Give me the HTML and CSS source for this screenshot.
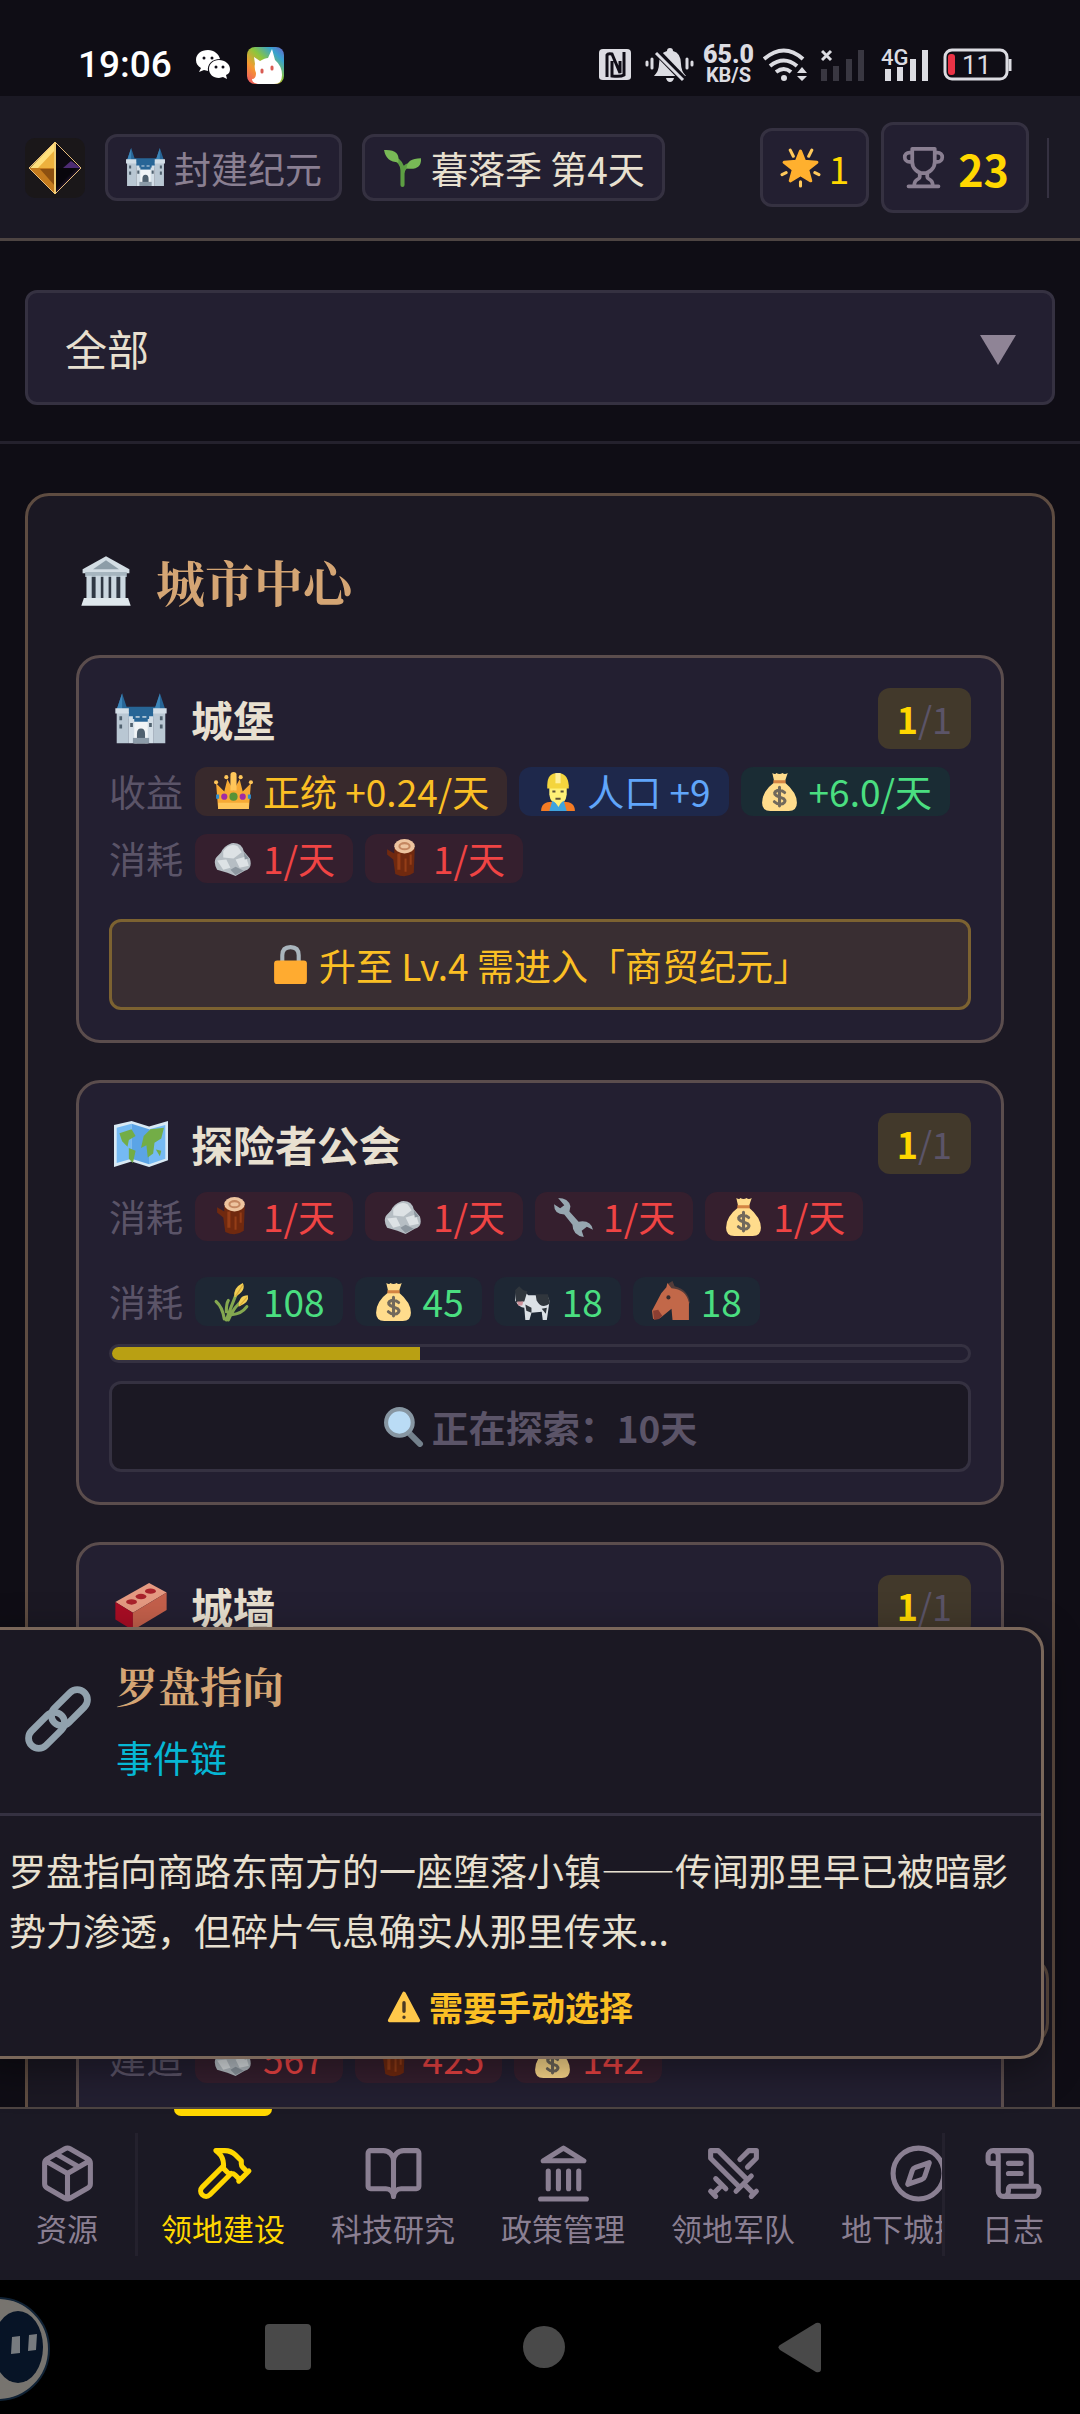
FILE: index.html
```
<!DOCTYPE html>
<html lang="zh-CN">

<head>
    <meta charset="UTF-8">
    <meta name="viewport" content="width=device-width, initial-scale=1.0">
    <title>领地建设</title>
    <link rel="stylesheet" href="styles.css">
</head>

<body>
    <!-- 图标 -->
    <svg class="sprite" aria-hidden="true">
        <symbol id="castle" viewBox="0 0 40 40">
            <path fill="#276596" d="M2 13 6 1l4 12zM30 13l4-12 4 12zM9 11h22v9H9z" />
            <path fill="#3d85b8" d="M6 1v12H2zM34 1v12h-4z" />
            <path fill="#b9c7d3" d="M2 15h9v23H2zM29 15h9v23h-9z" />
            <path fill="#d3dee7" d="M11 18h3v2h2v-2h3v2h2v-2h3v2h2v-2h3v20H11zM1 12h10v4H1zM29 12h10v4H29z" />
            <path fill="#f1f4f6" d="M15 22h10v16H15z" />
            <path fill="#276596" d="M15 19h10v3H15z" />
            <path fill="#50616f" d="M17 38v-7q0-4 3-4t3 4v7zM4 18h2v3H4zM34 18h2v3h-2zM4 24h2v3H4zM34 24h2v3h-2zM12 23h2v3h-2zM26 23h2v3h-2z" />
            <path fill="#8c9ba8" d="M14 34h12v4H14z" />
        </symbol>
        <symbol id="sprout" viewBox="0 0 40 40">
            <path fill="none" stroke="#5d9e43" stroke-width="4" stroke-linecap="round" d="M20 37V23q0-8-8-12M20 26q0-7 8-9" />
            <path fill="#78b956" d="M2 3q16-1 14 12Q4 15 2 3zM38 11q1 12-14 10 0-10 14-10z" />
        </symbol>
        <symbol id="star" viewBox="0 0 40 40">
            <path fill="#ffb02e" stroke="#ffb02e" stroke-width="3" stroke-linejoin="round" d="m20 4 4 10 12 1-9 7 3 11-10-6-10 6 3-11-9-7 12-1z" />
            <path fill="none" stroke="#ffc95c" stroke-width="3" stroke-linecap="round" d="m10 3 3 6M31 3l-3 6M2 27l4-2M38 27l-4-2M20 34v4" />
        </symbol>
        <symbol id="temple" viewBox="0 0 40 40">
            <path fill="#d3dde4" d="M20 1 38 11v3H2v-3z" />
            <path fill="#8d9da8" d="m20 4 10 7H10z" />
            <path fill="#a6b5bf" d="M4 13h32v4H4z" />
            <path fill="#303844" d="M5 17h30v17H5z" />
            <path fill="#cbd7e0" d="M5 16h4v18H5zM12 16h4v18h-4zM18 16h4v18h-4zM24 16h4v18h-4zM31 16h4v18h-4z" />
            <path fill="#dfe7ec" d="M3 33h34l2 6H1z" />
        </symbol>
        <symbol id="crown" viewBox="0 0 40 40">
            <path fill="#f6a934" d="M3 12 11 20 14 8l6 11 6-11 3 12 8-8-2 25H5z" />
            <path fill="#ffc65a" d="M5 31h30v6H5zM17 5h6v14h-6z" />
            <g fill="#ffc65a">
                <circle cx="3" cy="11" r="2" />
                <circle cx="37" cy="11" r="2" />
                <circle cx="13" cy="6" r="2" />
                <circle cx="27" cy="6" r="2" />
                <circle cx="20" cy="4" r="3" />
            </g>
            <circle cx="20" cy="25" r="4" fill="#589236" />
            <g fill="#a12ba4">
                <circle cx="11" cy="25" r="3" />
                <circle cx="29" cy="25" r="3" />
            </g>
            <path fill="#318fcf" d="M3 23h3v4H3zM34 23h3v4h-3z" />
        </symbol>
        <symbol id="worker" viewBox="0 0 40 40">
            <path fill="#fff176" d="M12 14h17v9q-1 9-8 10-8-1-9-10z" />
            <path fill="#f4d53d" d="M10 14Q10 2 20 2t11 12v3H10z" />
            <path fill="#fff09a" d="M18 2h5v10h-5z" />
            <path fill="#f47b24" d="M4 39q0-9 11-9l6 3 5-3q11 0 11 9z" />
            <path fill="#3fa4de" d="m15 29 6 4 5-4 3 10H12z" />
            <path fill="#fff176" d="M16 28h9l-4 7z" />
            <path stroke="#5d5338" stroke-width="2" d="M15 20h3M23 20h3M18 27h5" />
        </symbol>
        <symbol id="money" viewBox="0 0 40 40">
            <path fill="#ffdc8c" d="M13 2q3 2 4 0 3 2 6 0 2 2 5 0l-3 9q12 10 12 20 0 8-8 8H11q-8 0-8-8 0-11 12-20z" />
            <path fill="#d48443" d="M14 9h12v3H14z" />
            <path fill="none" stroke="#71695c" stroke-width="3" stroke-linecap="round" d="M20 16v18M25 21q-3-3-7-2-5 2-1 5l7 3q3 3-1 5-5 1-8-2" />
        </symbol>
        <symbol id="stone" viewBox="0 0 40 40">
            <path fill="#b6bec4" d="M8 14q2-6 10-9 10-1 12 8l6 7q3 10-5 12l-9 5-8-3-10-3Q-1 22 5 17z" />
            <path fill="#dde2e5" d="M10 13q6-9 14-5l4 6-8 6-10-1zM4 22l9-1 4 8-7 2zM22 21l10-3 3 9-9 2z" />
            <path fill="#8c969f" d="m17 31 5-3 8 4-8 4zM30 14l5 6-4 1z" />
        </symbol>
        <symbol id="wood" viewBox="0 0 40 40">
            <path fill="#70290f" d="M11 10h20l-1 24q-8 6-18 1l-2-14-6-5v-5l7 4z" />
            <path fill="#943d17" d="M14 15h3v16h-3zM21 20h2v13h-2zM26 16h2v10h-2z" />
            <ellipse cx="21" cy="8" rx="10" ry="7" fill="#edc49f" />
            <ellipse cx="21" cy="8" rx="5" ry="3" fill="none" stroke="#c48761" stroke-width="2" />
        </symbol>
        <symbol id="lock" viewBox="0 0 40 40">
            <path fill="none" stroke="#a9b5bd" stroke-width="4" d="M12 18V11q0-8 8-8t8 8v7" />
            <rect x="4" y="16" width="32" height="23" rx="3" fill="#ffab30" />
        </symbol>
        <symbol id="map" viewBox="0 0 40 40">
            <path fill="#d8e9f4" d="m0 6 13-3 13 4 14-4v29l-14 5-13-4-13 4z" />
            <path fill="#75baf3" d="m2 8 11-3v26L2 34zM26 9l12-3v25l-12 4z" />
            <path fill="#5ba4e6" d="m13 5 13 4v26l-13-4z" />
            <path fill="#73ad47" d="m4 12 9-3 3 5-5 3-1 5-4-4zM11 23l5 2-2 9-3-3zM22 14l5-5 10-1-2 8-5 3-1 8-4 3-1-9-4 2zM31 24l4 1-1 4z" />
        </symbol>
        <symbol id="wrench" viewBox="0 0 40 40">
            <path fill="#96a6b0" d="M5 2q10 0 12 8l-1 5 9 10q12-2 14 8l-6-3-5 4 2 6Q19 38 19 28l-8-10Q1 18 1 8l6 4 4-3z" />
        </symbol>
        <symbol id="wheat" viewBox="0 0 40 40">
            <path fill="none" stroke="#84a850" stroke-width="3" stroke-linecap="round" d="M13 38Q18 24 23 12M15 38q5-13 15-20M11 37Q9 25 3 20M18 33q10-1 15-8M13 30q0-8 2-11" />
            <path fill="#f2cf54" d="M21 16q-2-9 8-14 4 7-8 14zM25 25q0-11 9-11 2 7-9 11z" />
            <path d="M22 15 29 4M26 24l7-8" stroke="#d7a838" />
        </symbol>
        <symbol id="cow" viewBox="0 0 40 40">
            <path fill="#dce1e6" d="m4 10 5-2 7 6h17q5 3 3 10l-2 14h-4l-1-8-10 1-2 7h-4l-1-12q-5 0-9-7z" />
            <path fill="#30363d" d="m3 9 4-4 4 4 4 1-3 10-8 1zM23 13h12l2 9q-8 6-13-3zM13 23l6 3v5l-5-2zM29 27l5-1-1 6z" />
            <path fill="#cf929b" d="M5 20h6l-1 4H6z" />
        </symbol>
        <symbol id="horse" viewBox="0 0 40 40">
            <path fill="#543c39" d="m16 3 5-3 2 5q13 3 15 16l-4 6z" />
            <path fill="#c26849" d="m16 2 4 5q14 1 17 14v17H21l-1-11-11 9-7 1-1-8 9-17 5-6z" />
            <path fill="#8b3e32" d="m2 29 5-1 4 6-3 3-5 1z" />
            <circle cx="17" cy="16" r="2" fill="#382b2c" />
        </symbol>
        <symbol id="search" viewBox="0 0 40 40">
            <path stroke="#74818c" stroke-width="6" stroke-linecap="round" d="m26 27 10 10" />
            <circle cx="16" cy="16" r="13" fill="#badcf5" stroke="#8796a2" stroke-width="4" />
        </symbol>
        <symbol id="brick" viewBox="0 0 40 40">
            <path fill="#e59a82" d="m1 17 25-14 13 7-25 15z" />
            <path fill="#a90d24" d="m1 17 13 8v13L1 30z" />
            <path fill="#c4604b" d="m14 25 25-15v13L14 38z" />
            <g fill="#a9222b">
                <ellipse cx="13" cy="17" rx="4" ry="2" />
                <ellipse cx="20" cy="13" rx="4" ry="2" />
                <ellipse cx="27" cy="9" rx="4" ry="2" />
            </g>
        </symbol>
        <symbol id="chain" viewBox="0 0 40 40">
            <g fill="none" stroke="#91a1ad" stroke-width="4" transform="rotate(45 20 20)">
                <rect x="14" y="-2" width="12" height="25" rx="6" />
                <rect x="14" y="17" width="12" height="25" rx="6" />
            </g>
        </symbol>
        <symbol id="warning" viewBox="0 0 40 40">
            <path fill="#ffc84a" stroke="#ffc84a" stroke-width="4" stroke-linejoin="round" d="m20 4 17 32H3z" />
            <path stroke="#4b3a23" stroke-width="4" stroke-linecap="round" d="M20 15v10M20 32v0" />
        </symbol>
        <symbol id="trophy" viewBox="0 0 24 24">
            <path d="M6 9H4.500a2.500 2.500 0 0 1 0-5H6M18 9h1.500a2.500 2.500 0 0 0 0-5H18M4 22h16M10 14.660V17c0 .55-.47.98-.97 1.210C7.850 18.750 7 20.240 7 22M14 14.660V17c0 .55.47.98.97 1.210C16.150 18.750 17 20.240 17 22M18 2H6v7a6 6 0 0 0 12 0V2Z" />
        </symbol>
    </svg>

    <div class="app">
        <div class="status">
            <span class="clock">19:06</span>
            <svg class="wechat" viewBox="0 0 34 30">
                <path fill="#fff" d="M12 0C5 0 0 4 0 10c0 4 2 6 5 8l-2 4 5-2 4 1C11 14 16 9 24 9 23 4 18 0 12 0z" />
                <path fill="#fff" d="M23 10c-6 0-10 4-10 9s4 9 10 9l4-1 4 2-1-4c3-1 4-3 4-6 0-5-5-9-11-9z" />
                <path stroke="#100e17" stroke-width="3" stroke-linecap="round" d="M8 8v0M16 8v0M20 17v0M27 17v0" />
            </svg>
            <svg class="pet" viewBox="0 0 37 37">
                <defs>
                    <linearGradient id="rainbow" x1="0" y1="1" x2="1" y2="0">
                        <stop offset="0" stop-color="#f0506a" />
                        <stop offset="0.300" stop-color="#f59a30" />
                        <stop offset="0.550" stop-color="#8cc63c" />
                        <stop offset="0.800" stop-color="#38a3cf" />
                        <stop offset="1" stop-color="#6a60c8" />
                    </linearGradient>
                </defs>
                <rect width="37" height="37" rx="8" fill="url(#rainbow)" />
                <path fill="#fff" d="M8 17 7 10l6 4q5-3 8-3l4-9 3 11q7 6 7 15 0 9-8 9H11q-6-1-6-5 4 0 4-6-2-5-1-9z" />
                <path stroke="#d85b52" stroke-width="3" stroke-linecap="round" d="M15 23v2M25 20v2" />
            </svg>
            <div class="status-right">
                <svg class="nfc" viewBox="0 0 37 34">
                    <path fill="#dcdce2" d="M4 1h24q4 0 4 4v24q0 3-4 3H4q-4 0-4-3V5q0-4 4-4z" />
                    <path fill="none" stroke="#100e17" stroke-width="3" d="M8 29V7q1-2 5-1l8 19V13M13 13v15q9 1 12-1V4" />
                </svg>
                <svg class="bell" viewBox="0 0 49 34">
                    <path fill="#dcdce2" d="M25 0q3 0 3 3 8 2 8 13 0 7 5 12H9q5-5 5-12Q14 5 22 3q0-3 3-3zM21 30h8q-1 4-4 4t-4-4z" />
                    <path stroke="#100e17" stroke-width="7" d="m11 3 28 29" />
                    <path stroke="#dcdce2" stroke-width="3" d="m11 5 27 27" />
                    <path stroke="#dcdce2" stroke-width="3" stroke-linecap="round" d="M7 11v9M42 11v9M2 14v3M47 14v3" />
                </svg>
                <div class="speed">
                    <b>65.0</b>
                    <span>KB/S</span>
                </div>
                <svg class="wifi" viewBox="0 0 49 34">
                    <path fill="none" stroke="#dcdce2" stroke-width="4" d="M1 11q20-17 39 0M7 18q14-11 27 0M13 24q8-6 15 0" />
                    <circle cx="21" cy="30" r="3" fill="#dcdce2" />
                    <path fill="#dcdce2" d="m39 19 5 6H34zM39 33l5-5H34z" />
                </svg>
                <svg class="signal" viewBox="0 0 51 34">
                    <path fill="#393741" d="M0 21h6v12H0zM12 18h6v15h-6zM25 11h6v22h-6zM37 2h6v31h-6z" />
                    <path stroke="#dcdce2" stroke-width="3" d="m1 3 9 9M10 3l-9 9" />
                </svg>
                <svg class="signal-4g" viewBox="0 0 53 34">
                    <text x="0" y="17">4G</text>
                    <path fill="#dcdce2" d="M4 21h6v12H4zM16 19h6v14h-6zM29 11h6v22h-6zM41 2h6v31h-6z" />
                </svg>
                <svg class="battery" viewBox="0 0 69 34">
                    <rect x="2" y="2" width="62" height="29" rx="7" fill="none" stroke="#dcdce2" stroke-width="3" />
                    <path stroke="#dcdce2" stroke-width="3" d="M67 11v12" />
                    <rect x="5" y="6" width="7" height="21" rx="3" fill="#ea3346" />
                    <text x="19" y="26">11</text>
                </svg>
            </div>
        </div>

        <header class="topbar">
            <svg class="logo" viewBox="0 0 60 60">
                <defs>
                    <linearGradient id="gem" x1="0" y1="0" x2="1" y2="1">
                        <stop offset="0.400" stop-color="#08060c" />
                        <stop offset="1" stop-color="#8d53ce" />
                    </linearGradient>
                </defs>
                <rect width="60" height="60" rx="10" fill="#1a1719" />
                <path fill="#ffe07c" d="M30 4v27H4z" />
                <path fill="#edb13d" d="m30 12-17 18h17z" />
                <path fill="#c47b1d" d="M4 30h26v26z" />
                <path fill="#8c5010" d="M30 31v17L15 31z" />
                <path fill="#0c0911" d="M30 4 56 30H30z" />
                <path fill="url(#gem)" d="M30 30h26L30 56z" />
                <path fill="#4d2b73" d="m46 23 10 7H38z" />
                <path fill="none" stroke="#e8bd7c" d="m30 4 26 26-26 26L4 30z" />
                <path stroke="#f2cd73" stroke-width="2" d="M30 4v52" />
            </svg>
            <div class="pill pill-era"><svg class="emoji"><use href="#castle" /></svg>封建纪元</div>
            <div class="pill"><svg class="emoji"><use href="#sprout" /></svg>暮落季 第4天</div>
            <div class="topbar-right">
                <button class="pill pill-star"><svg class="emoji"><use href="#star" /></svg>1</button>
                <button class="pill pill-score"><svg class="line-icon"><use href="#trophy" /></svg>23</button>
                <span class="topbar-line"></span>
            </div>
        </header>

        <main class="content">
            <div class="filter">
                <select class="filter-select" aria-label="分类">
                    <option>全部</option>
                </select>
                <svg class="filter-arrow" viewBox="0 0 36 30"><path fill="#8f8496" d="M0 0h36L18 30z" /></svg>
            </div>

            <div class="list">
                <section class="district">
                    <h2 class="district-title"><svg><use href="#temple" /></svg>城市中心</h2>

                    <article class="building">
                        <div class="building-head">
                            <svg class="building-icon"><use href="#castle" /></svg>
                            <h3>城堡</h3>
                            <span class="count"><b>1</b>/1</span>
                        </div>
                        <div class="row">
                            <span class="row-label">收益</span>
                            <span class="chip chip-gold"><svg class="emoji"><use href="#crown" /></svg>正统 +0.24/天</span>
                            <span class="chip chip-blue"><svg class="emoji"><use href="#worker" /></svg>人口 +9</span>
                            <span class="chip chip-green"><svg class="emoji"><use href="#money" /></svg>+6.0/天</span>
                        </div>
                        <div class="row">
                            <span class="row-label">消耗</span>
                            <span class="chip chip-red"><svg class="emoji"><use href="#stone" /></svg>1/天</span>
                            <span class="chip chip-red"><svg class="emoji"><use href="#wood" /></svg>1/天</span>
                        </div>
                        <button class="action action-locked"><svg class="emoji"><use href="#lock" /></svg>升至 Lv.4 需进入「商贸纪元」</button>
                    </article>

                    <article class="building">
                        <div class="building-head">
                            <svg class="building-icon"><use href="#map" /></svg>
                            <h3>探险者公会</h3>
                            <span class="count"><b>1</b>/1</span>
                        </div>
                        <div class="row">
                            <span class="row-label">消耗</span>
                            <span class="chip chip-red"><svg class="emoji"><use href="#wood" /></svg>1/天</span>
                            <span class="chip chip-red"><svg class="emoji"><use href="#stone" /></svg>1/天</span>
                            <span class="chip chip-red"><svg class="emoji"><use href="#wrench" /></svg>1/天</span>
                            <span class="chip chip-red"><svg class="emoji"><use href="#money" /></svg>1/天</span>
                        </div>
                        <div class="row row-cost">
                            <span class="row-label">消耗</span>
                            <span class="chip chip-ok"><svg class="emoji"><use href="#wheat" /></svg>108</span>
                            <span class="chip chip-ok"><svg class="emoji"><use href="#money" /></svg>45</span>
                            <span class="chip chip-ok"><svg class="emoji"><use href="#cow" /></svg>18</span>
                            <span class="chip chip-ok"><svg class="emoji"><use href="#horse" /></svg>18</span>
                        </div>
                        <div class="progress">
                            <div class="progress-bar" style="width: 36%"></div>
                        </div>
                        <button class="action action-busy" disabled><svg class="emoji"><use href="#search" /></svg>正在探索：10天</button>
                    </article>

                    <article class="building">
                        <div class="building-head">
                            <svg class="building-icon"><use href="#brick" /></svg>
                            <h3>城墙</h3>
                            <span class="count"><b>1</b>/1</span>
                        </div>
                        <div class="building-space"></div>
                        <div class="row">
                            <span class="row-label">建造</span>
                            <span class="chip chip-red"><svg class="emoji"><use href="#stone" /></svg>567</span>
                            <span class="chip chip-red"><svg class="emoji"><use href="#wood" /></svg>425</span>
                            <span class="chip chip-red"><svg class="emoji"><use href="#money" /></svg>142</span>
                        </div>
                        <div class="building-space"></div>
                    </article>
                </section>
            </div>

            <div class="float-box"></div>

            <!-- 事件弹窗 -->
            <aside class="toast">
                <div class="toast-head">
                    <svg class="toast-icon"><use href="#chain" /></svg>
                    <div>
                        <h4>罗盘指向</h4>
                        <p class="toast-type">事件链</p>
                    </div>
                </div>
                <div class="toast-body">
                    <p>罗盘指向商路东南方的一座堕落小镇——传闻那里早已被暗影势力渗透，但碎片气息确实从那里传来...</p>
                    <p class="toast-warn"><svg><use href="#warning" /></svg>需要手动选择</p>
                </div>
            </aside>
        </main>

        <nav class="tabs">
            <a class="tab tab-left" href="#">
                <svg class="line-icon" viewBox="0 0 24 24">
                    <path d="M11 21.730a2 2 0 0 0 2 0l7-4A2 2 0 0 0 21 16V8a2 2 0 0 0-1-1.730l-7-4a2 2 0 0 0-2 0l-7 4A2 2 0 0 0 3 8v8a2 2 0 0 0 1 1.730zM12 22V12M3.290 7 12 12l8.710-5M7.500 4.270l9 5.150" />
                </svg>
                资源
            </a>
            <div class="tabs-scroll">
                <a class="tab active" href="#">
                    <svg class="line-icon" viewBox="0 0 24 24">
                        <path d="m15 12-8.373 8.373a1 1 0 1 1-3-3L12 9M18 15l4-4M21.500 11.500l-1.914-1.914A2 2 0 0 1 19 8.172V7l-2.260-2.260a6 6 0 0 0-4.202-1.756L9 2.960l.92.82A6.180 6.180 0 0 1 12 8.400V10l2 2h1.172a2 2 0 0 1 1.414.586L18.500 14.500" />
                    </svg>
                    领地建设
                </a>
                <a class="tab" href="#">
                    <svg class="line-icon" viewBox="0 0 24 24">
                        <path d="M12 7v14M3 18a1 1 0 0 1-1-1V4a1 1 0 0 1 1-1h5a4 4 0 0 1 4 4 4 4 0 0 1 4-4h5a1 1 0 0 1 1 1v13a1 1 0 0 1-1 1h-6a3 3 0 0 0-3 3 3 3 0 0 0-3-3z" />
                    </svg>
                    科技研究
                </a>
                <a class="tab" href="#">
                    <svg class="line-icon" viewBox="0 0 24 24">
                        <path d="M3 22h18M6 18v-7M10 18v-7M14 18v-7M18 18v-7M12 2l8 5H4z" />
                    </svg>
                    政策管理
                </a>
                <a class="tab" href="#">
                    <svg class="line-icon" viewBox="0 0 24 24">
                        <path d="M14.500 17.500 3 6V3h3l11.500 11.500M13 19l6-6M16 16l4 4M19 21l2-2M14.500 6.500 18 3h3v3l-3.500 3.500M5 14l4 4M7 17l-3 3M3 19l2 2" />
                    </svg>
                    领地军队
                </a>
                <a class="tab" href="#">
                    <svg class="line-icon" viewBox="0 0 24 24">
                        <circle cx="12" cy="12" r="10" />
                        <path d="m16.240 7.760-1.804 5.411a2 2 0 0 1-1.265 1.265L7.760 16.240l1.804-5.411a2 2 0 0 1 1.265-1.265z" />
                    </svg>
                    地下城探索
                </a>
            </div>
            <a class="tab tab-right" href="#">
                <svg class="line-icon" viewBox="0 0 24 24">
                    <path d="M15 12h-5M15 8h-5M19 17V5a2 2 0 0 0-2-2H4M8 21h12a2 2 0 0 0 2-2v-1a1 1 0 0 0-1-1H11a1 1 0 0 0-1 1v1a2 2 0 1 1-4 0V5a2 2 0 1 0-4 0v2a1 1 0 0 0 1 1h3" />
                </svg>
                日志
            </a>
        </nav>

        <div class="system">
            <svg class="robot" viewBox="0 0 52 106">
                <circle cx="-2" cy="53" r="51" fill="#77746f" stroke="#102235" stroke-width="2" />
                <ellipse cx="18" cy="51" rx="25" ry="36" fill="#071426" />
                <path fill="#777b7f" d="m12 41 8-1v17l-9 1zM29 39l8-1-1 16-8 1z" />
            </svg>
            <button aria-label="最近任务"><svg width="46" height="46"><rect width="46" height="46" rx="4" /></svg></button>
            <button aria-label="主页"><svg width="43" height="43"><circle cx="21" cy="21" r="21" /></svg></button>
            <button aria-label="返回"><svg width="43" height="51"><path d="M2 23 38 1q5-1 5 3v43q0 4-5 3L2 28q-3-3 0-5z" /></svg></button>
        </div>
    </div>
</body>

</html>
```
FILE: styles.css
```
* {
    box-sizing: border-box;
    margin: 0;
    padding: 0;
}

body {
    background: #0f0d15;
    color: #e8e0d0;
    font-family: "Noto Sans CJK SC", sans-serif;
    font-size: 37px;
}

button {
    border: none;
    background: none;
    color: inherit;
    font: inherit;
}

a {
    color: inherit;
    text-decoration: none;
}

svg {
    display: block;
    flex-shrink: 0;
}

.sprite {
    position: absolute;
    width: 0;
    height: 0;
}

.app {
    display: flex;
    flex-direction: column;
    height: 100vh;
    overflow: hidden;
}

.emoji {
    width: 41px;
    height: 41px;
}

.line-icon {
    width: 61px;
    height: 61px;
    fill: none;
    stroke: currentColor;
    stroke-width: 2;
    stroke-linecap: round;
    stroke-linejoin: round;
}

/* 状态栏 */
.status {
    display: flex;
    align-items: center;
    height: 96px;
    padding: 34px 68px 0 78px;
    flex-shrink: 0;
}

.clock {
    color: #fff;
    font: 500 37px/44px Roboto, sans-serif;
}

.wechat {
    width: 34px;
    height: 30px;
    margin-left: 24px;
}

.pet {
    width: 37px;
    height: 37px;
    margin-left: 17px;
}

.status-right {
    display: flex;
    align-items: center;
    gap: 9px;
    margin-left: auto;
    color: #dcdce2;
    font-family: Roboto, sans-serif;
}

.status-right svg {
    height: 34px;
}

.nfc {
    width: 37px;
}

.bell,
.wifi {
    width: 49px;
}

.signal {
    width: 51px;
}

.signal-4g {
    width: 53px;
}

.battery {
    width: 69px;
}

.signal-4g text {
    fill: #dcdce2;
    font: 500 22px Roboto, sans-serif;
}

.battery text {
    fill: #dcdce2;
    font: 26px Roboto, sans-serif;
}

.speed {
    width: 51px;
    text-align: center;
    font-size: 20px;
    font-weight: 700;
    line-height: 20px;
    white-space: nowrap;
}

.speed b {
    display: block;
    font-size: 25px;
}

.speed span {
    display: block;
}

/* 顶栏 */
.topbar {
    display: flex;
    align-items: center;
    gap: 20px;
    padding: 26px 31px 25px 25px;
    background: #1b1924;
    border-bottom: 3px solid #4d4442;
    white-space: nowrap;
    flex-shrink: 0;
}

.logo {
    width: 60px;
    height: 60px;
}

.pill {
    display: flex;
    align-items: center;
    gap: 8px;
    height: 67px;
    padding: 0 17px;
    background: #231f31;
    border: 3px solid #353141;
    border-radius: 12px;
}

.pill-era {
    color: #8a7f92;
}

.topbar-right {
    display: flex;
    align-items: center;
    gap: 12px;
    margin-left: auto;
}

.pill-star {
    height: 79px;
    color: #ffd700;
}

.pill-score {
    gap: 12px;
    height: 91px;
    color: #ffd700;
    font-size: 43px;
    font-weight: 700;
}

.pill-score .line-icon {
    width: 45px;
    height: 45px;
    color: #8a7f92;
}

.topbar-line {
    width: 2px;
    height: 60px;
    margin-left: 6px;
    background: #353141;
}

/* 内容 */
.content {
    position: relative;
    display: flex;
    flex-direction: column;
    flex: 1;
    min-height: 0;
}

.filter {
    position: relative;
    padding: 49px 25px 36px;
    border-bottom: 3px solid #24212d;
}

.filter-select {
    display: block;
    width: 100%;
    height: 115px;
    padding: 0 37px;
    appearance: none;
    background: #231f31;
    border: 3px solid #353141;
    border-radius: 12px;
    color: #e8e0d0;
    font: 42px "Noto Sans CJK SC", sans-serif;
}

.filter-arrow {
    position: absolute;
    top: 94px;
    right: 64px;
    width: 36px;
    height: 30px;
}

.list {
    flex: 1;
    min-height: 0;
    overflow: hidden;
    padding: 49px 25px 0;
}

.district {
    padding: 48px;
    background: #1b1823;
    border: 3px solid #5e4c41;
    border-radius: 24px;
}

.district-title {
    display: flex;
    align-items: center;
    gap: 24px;
    margin-bottom: 37px;
    padding-left: 4px;
    color: #d4a574;
    font: bold 49px/74px "Noto Serif CJK SC", serif;
}

.district-title svg {
    width: 52px;
    height: 52px;
}

.building {
    display: flex;
    flex-direction: column;
    gap: 18px;
    margin-bottom: 37px;
    padding: 30px;
    background: #231f31;
    border: 3px solid #5b4d4d;
    border-radius: 24px;
}

.building-head {
    display: flex;
    align-items: center;
    gap: 18px;
    height: 61px;
}

.building-icon {
    width: 56px;
    height: 54px;
    margin: 0 4px;
}

.building h3 {
    font-size: 42px;
    line-height: 60px;
}

.count {
    margin-left: auto;
    padding: 0 19px;
    background: #42392b;
    border-radius: 12px;
    color: #5b5468;
    font-size: 36px;
    line-height: 61px;
}

.count b {
    color: #ffd700;
}

.row {
    display: flex;
    gap: 12px;
    line-height: 49px;
    white-space: nowrap;
}

.row-label {
    color: #5b5468;
}

.row-cost {
    margin-top: 18px;
}

.chip {
    display: flex;
    align-items: center;
    gap: 9px;
    height: 49px;
    padding: 0 18px;
    border-radius: 12px;
}

.chip-gold {
    background: #38292c;
    color: #fbbf24;
}

.chip-blue {
    background: #1e284b;
    color: #60a5fa;
}

.chip-green {
    background: #1a2c34;
    color: #4ade80;
}

.chip-ok {
    background: #1e2734;
    color: #4ade80;
}

.chip-red {
    background: #351f2e;
    color: #ef4444;
}

.action {
    display: flex;
    align-items: center;
    justify-content: center;
    gap: 8px;
    height: 91px;
    border: 3px solid #353141;
    border-radius: 12px;
}

.action-locked {
    margin-top: 18px;
    background: #392e32;
    border-color: #7c6231;
    color: #fbbf24;
}

.action-busy {
    background: #1b1823;
    color: #5b5468;
    font-weight: 700;
}

.progress {
    height: 19px;
    overflow: hidden;
    border: 3px solid #353141;
    border-radius: 10px;
}

.progress-bar {
    height: 100%;
    background: #b9a013;
}

.building-space {
    height: 362px;
}

/* 弹窗 */
.float-box {
    position: absolute;
    right: 31px;
    bottom: 60px;
    width: 92px;
    height: 92px;
    background: #231f31;
    border: 3px solid #5e4c41;
    border-radius: 24px;
}

.toast {
    position: absolute;
    right: 36px;
    bottom: 48px;
    left: -27px;
    background: #1b1823;
    border: 3px solid #7a675a;
    border-radius: 24px;
    box-shadow: 0 10px 40px rgba(0, 0, 0, 0.4);
}

.toast-head {
    display: flex;
    align-items: center;
    gap: 24px;
    padding: 25px 48px 31px;
    border-bottom: 3px solid #353141;
}

.toast-icon {
    width: 68px;
    height: 68px;
}

.toast h4 {
    margin-bottom: 17px;
    color: #d4a574;
    font: bold 42px/60px "Noto Serif CJK SC", serif;
}

.toast-type {
    color: #06b6d4;
    line-height: 50px;
}

.toast-body {
    padding: 24px 30px 25px 33px;
    line-height: 60px;
}

.toast-warn {
    display: flex;
    align-items: center;
    justify-content: center;
    gap: 8px;
    margin-top: 23px;
    color: #fbbf24;
    font-size: 34px;
    font-weight: 700;
    line-height: 48px;
}

.toast-warn svg {
    width: 34px;
    height: 34px;
}

/* 底部导航 */
.tabs {
    display: flex;
    height: 173px;
    flex-shrink: 0;
    background: #1b1924;
    border-top: 2px solid #4d4442;
    color: #8a7f92;
}

.tabs-scroll {
    display: flex;
    flex: 1;
    min-width: 0;
    overflow: hidden;
}

.tab {
    position: relative;
    display: flex;
    flex-direction: column;
    align-items: center;
    gap: 4px;
    padding: 34px 23px 0;
    flex-shrink: 0;
    font-size: 31px;
    line-height: 40px;
    white-space: nowrap;
}

.tab-left {
    width: 138px;
    padding-left: 19px;
}

.tab-right {
    width: 138px;
    padding-right: 19px;
}

.tab-left::after,
.tab-right::before {
    content: "";
    position: absolute;
    top: 24px;
    right: 0;
    width: 3px;
    height: 123px;
    background: #24212d;
}

.tab-right::before {
    right: auto;
    left: 0;
}

.active {
    color: #ffd700;
}

.active::before {
    content: "";
    position: absolute;
    top: 0;
    width: 98px;
    height: 7px;
    background: #ffd700;
    border-radius: 0 0 7px 7px;
}

/* 系统导航 */
.system {
    position: relative;
    display: flex;
    align-items: center;
    justify-content: space-between;
    height: 134px;
    padding: 0 24% 0 24.5%;
    flex-shrink: 0;
    background: #000;
    fill: #494949;
}

.robot {
    position: absolute;
    top: 16px;
    left: 0;
    width: 52px;
    height: 106px;
}
```
